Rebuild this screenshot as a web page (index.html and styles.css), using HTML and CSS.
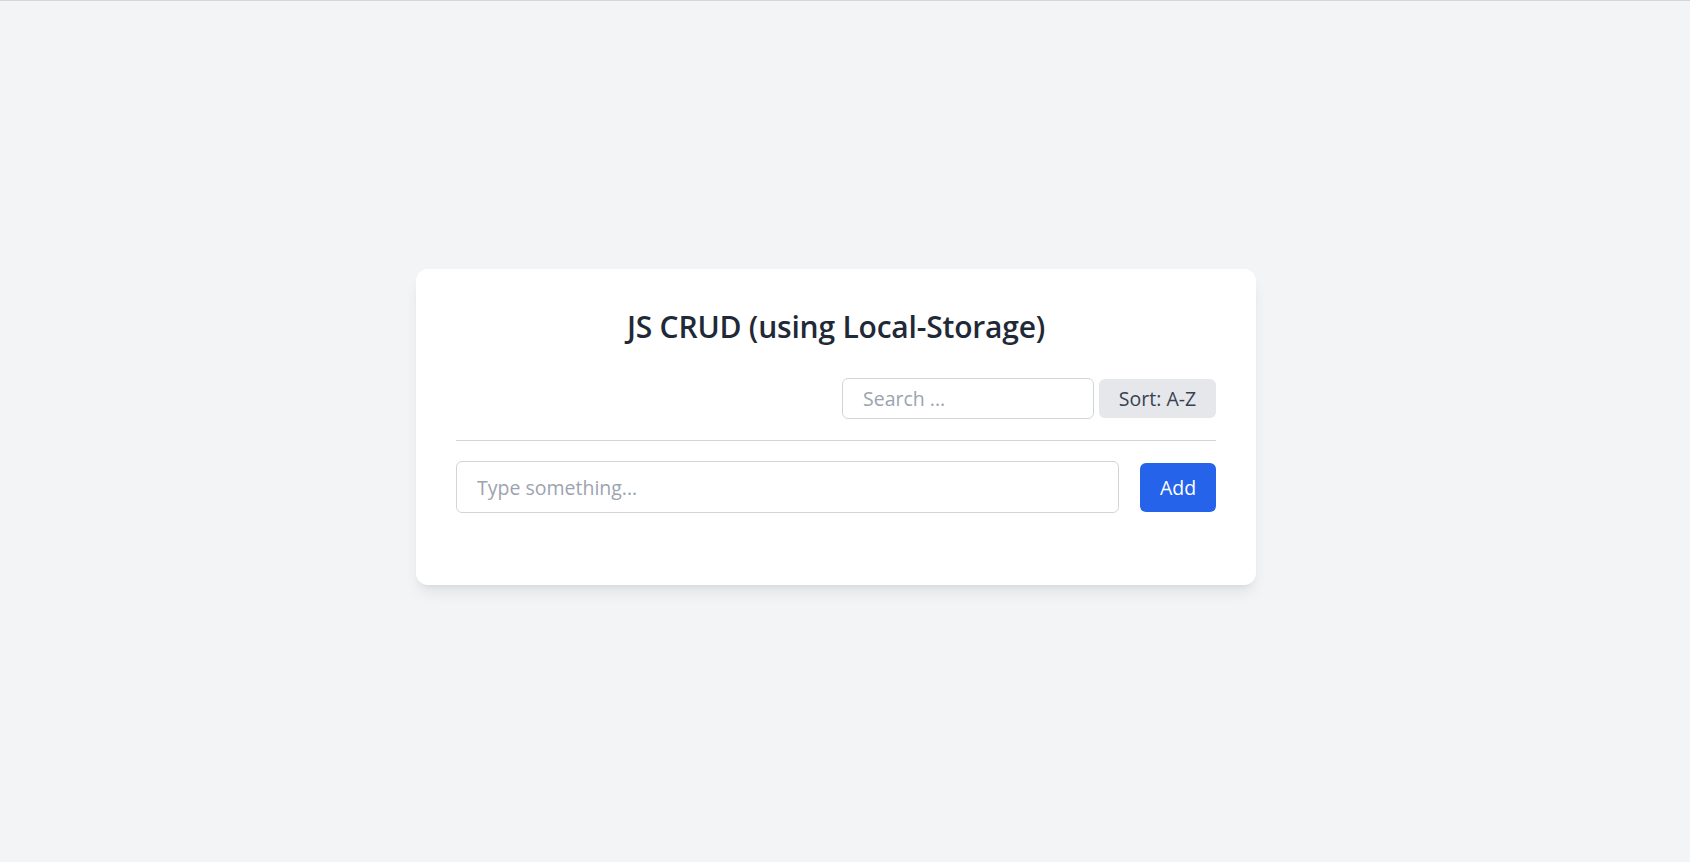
FILE: index.html
```html
<!DOCTYPE html>
<html lang="en">
<head>
<meta charset="UTF-8">
<title>JS CRUD (using Local-Storage)</title>
<link rel="stylesheet" href="styles.css">
</head>
<body>
<main class="page">
  <section class="card">
    <h1 class="title">JS CRUD (using Local-Storage)</h1>
    <div class="toolbar">
      <input class="search" type="text" placeholder="Search ...">
      <button class="sort-btn" type="button">Sort: A-Z</button>
    </div>
    <hr class="divider">
    <form class="add-form">
      <input class="add-input" type="text" placeholder="Type something...">
      <button class="add-btn" type="button">Add</button>
    </form>
    <ul class="list"></ul>
  </section>
</main>
</body>
</html>
```

FILE: styles.css
```css
* {
  box-sizing: border-box;
}

html, body {
  margin: 0;
  padding: 0;
}

body {
  background: #f3f4f6;
  border-top: 1px solid #d4d6da;
  font-family: "Open Sans", "Noto Sans", "Liberation Sans", sans-serif;
  color: #1f2937;
}

.page {
  min-height: calc(100vh - 1px);
  display: flex;
  align-items: center;
  justify-content: center;
  padding: 0 18px 9px 0;
}

.card {
  width: 840px;
  background: #ffffff;
  border-radius: 12px;
  box-shadow: 0 10px 15px -3px rgba(0, 0, 0, 0.08), 0 4px 6px -4px rgba(0, 0, 0, 0.08);
  padding: 40px 40px 40px;
}

.title {
  margin: 0 0 33px;
  font-size: 30px;
  line-height: 36px;
  font-weight: 600;
  text-align: center;
  color: #1f2937;
  letter-spacing: -0.2px;
}

.toolbar {
  display: flex;
  justify-content: flex-end;
  align-items: center;
  gap: 5px;
  height: 41px;
}

.search {
  width: 252px;
  height: 41px;
  border: 1px solid #d1d5db;
  border-radius: 6px;
  padding: 0 20px;
  font-family: inherit;
  font-size: 19.5px;
  color: #374151;
  outline: none;
}

.search::placeholder,
.add-input::placeholder {
  color: #9ca3af;
}

.sort-btn {
  width: 117px;
  height: 39px;
  border: none;
  border-radius: 6px;
  background: #e5e7eb;
  color: #374151;
  font-family: inherit;
  font-size: 19.5px;
  padding: 0;
}

.divider {
  margin: 21px 0 20px;
  border: none;
  border-top: 1px solid #d1d5db;
}

.add-form {
  display: flex;
  align-items: center;
  gap: 21px;
  margin: 0;
}

.add-input {
  flex: 1;
  height: 52px;
  border: 1px solid #d1d5db;
  border-radius: 6px;
  padding: 0 20px;
  font-family: inherit;
  font-size: 19.5px;
  color: #374151;
  outline: none;
}

.add-btn {
  width: 76px;
  height: 49px;
  border: none;
  border-radius: 6px;
  background: #2563eb;
  color: #ffffff;
  font-family: inherit;
  font-size: 19.5px;
  padding: 0;
}

.list {
  list-style: none;
  margin: 32px 0 0;
  padding: 0;
}
```
